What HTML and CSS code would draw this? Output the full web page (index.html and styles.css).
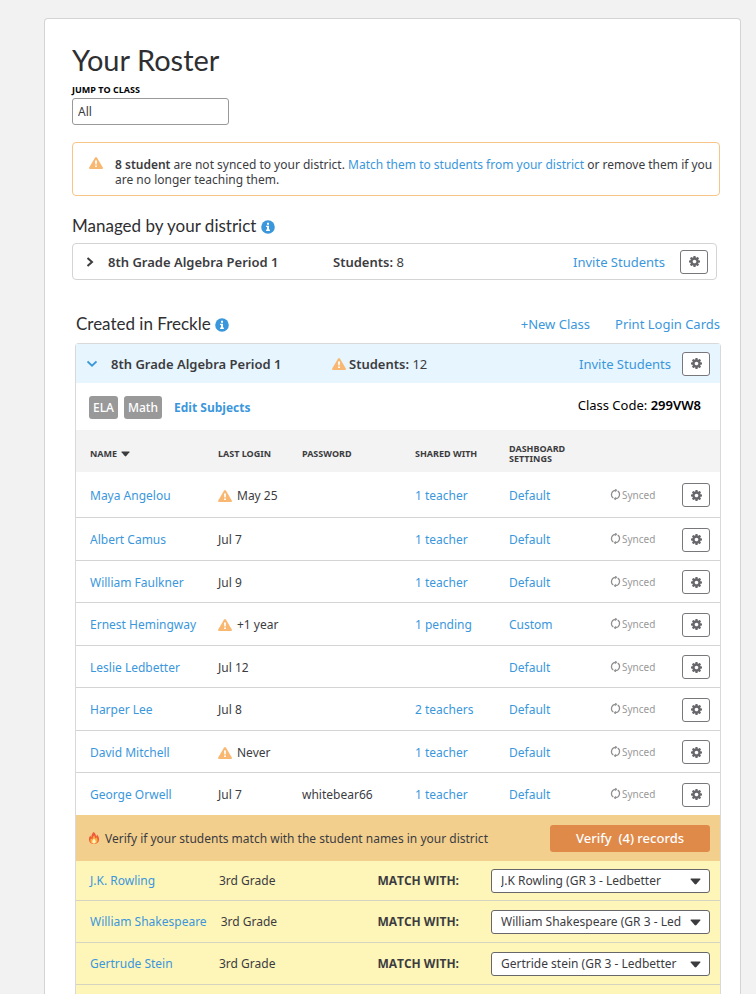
FILE: index.html
```html
<!DOCTYPE html>
<html lang="en">
<head>
<meta charset="utf-8">
<title>Your Roster</title>
<link rel="stylesheet" href="styles.css">
</head>
<body>
<svg class="sprite" aria-hidden="true">
  <symbol id="gear" viewBox="0 128 1536 1536"><path fill="currentColor" d="M1024 896q0-106-75-181t-181-75-181 75-75 181 75 181 181 75 181-75 75-181zm512-109v222q0 12-8 23t-20 13l-185 28q-19 54-39 91 35 50 107 138 10 12 10 25t-9 23q-27 37-99 108t-94 71q-12 0-26-9l-138-108q-44 23-91 38-16 136-29 186-7 28-36 28h-222q-14 0-24.5-8.5t-11.5-21.5l-28-184q-49-16-90-37l-141 107q-10 9-25 9-14 0-25-11-126-114-165-168-7-10-7-23 0-12 8-23 15-21 51-66.5t54-70.5q-27-50-41-99l-183-27q-13-2-21-12.5t-8-23.5v-222q0-12 8-23t19-13l186-28q14-46 39-92-40-57-107-138-10-12-10-24 0-10 9-23 26-36 98.5-107.5t94.5-71.5q13 0 26 10l138 107q44-23 91-38 16-136 29-186 7-28 36-28h222q14 0 24.5 8.5t11.5 21.5l28 184q49 16 90 37l142-107q9-9 24-9 13 0 25 10 129 119 165 170 7 8 7 22 0 12-8 23-15 21-51 66.5t-54 70.5q26 50 41 98l183 28q13 2 21 12.5t8 23.5z"/></symbol>
  <symbol id="warn" viewBox="0 0 14 12"><path fill="#f8b871" d="M6.1.6Q7-.5 7.9.6L13.8 10.600Q14.300 12 12.900 12H1.100Q-.3 12 .2 10.600Z"/><path fill="#fff" d="M6 3.500h2L7.700 7.500H6.300ZM6.100 8.400h1.800v1.700H6.100Z"/></symbol>
  <symbol id="info" viewBox="0 0 14 14"><circle cx="7" cy="7" r="6.800" fill="#3b97dc"/><path fill="#fff" d="M6 2.800h2v1.900H6ZM5.100 5.700H8v3.900h.9V11H5.100V9.600H6V7.100h-.9Z"/></symbol>
  <symbol id="sync" viewBox="0 0 12 12"><g fill="none" stroke="#8e8e8e" stroke-width="1.300"><path d="M3.600 9.800A4.600 4.600 0 0 1 6 1.400M8.400 2.200A4.600 4.600 0 0 1 6 10.600"/></g><path fill="#8e8e8e" d="M5.600-.8 8 1.400 5.600 3.600ZM6.400 8.400 4 10.600 6.400 12.800Z"/></symbol>
  <symbol id="fire" viewBox="0 0 12 12"><path fill="#ee5a3a" d="M5.600 0C7.500 1.300 8 3 8 4.400 8.700 4 9 3.200 9 2.600 10.500 4.200 11.200 6 11 8 10.700 10.500 8.600 12 6 12S1.300 10.500 1 8C.8 6.200 1.500 4.700 2.300 3.500 2.500 4.300 2.800 4.900 3.400 5.200 3.300 3.200 4.200 1.300 5.600 0Z"/><path fill="#fbb040" d="M6 3.500C7 4.500 7.300 5.500 7.200 6.500 8 6.200 8.300 5.700 8.500 5.200 10.300 7.300 10.200 11.600 6 11.800 1.900 11.600 1.900 8 3.100 6.200 3.500 6.800 4 7.100 4.500 7.200 4.500 5.800 5.100 4.500 6 3.500Z"/><path fill="#fff3c0" d="M6 6.800C8 8.300 8.500 11.300 6 11.600 3.500 11.300 4 8.300 6 6.800Z"/></symbol>
  <symbol id="right" viewBox="0 0 8 10"><path d="M1.500 1 6 5 1.500 9" fill="none" stroke="currentColor" stroke-width="2"/></symbol>
  <symbol id="down" viewBox="0 0 10 8"><path d="M.5 1.500 5 5.700 9.500 1.500" fill="none" stroke="currentColor" stroke-width="1.800"/></symbol>
  <symbol id="caret" viewBox="0 0 12 7"><path fill="currentColor" d="M1.200.3H10.800Q11.800.3 11.200 1.200L7 6.200Q6 7.200 5 6.200L.8 1.200Q.2.3 1.200.3Z"/></symbol>
</svg>
<main class="card">
  <h1>Your Roster</h1>
  <label class="jump-label" for="jump">JUMP TO CLASS</label>
  <select class="jump" id="jump"><option>All</option></select>

  <div class="notice">
    <svg class="icon-warn"><use href="#warn"/></svg>
    <p><b>8 student</b> are not synced to your district. <a href="#match">Match them to students from your district</a> or remove them if you are no longer teaching them.</p>
  </div>

  <h2>Managed by your district <svg class="icon-info"><use href="#info"/></svg></h2>
  <section class="class-bar managed">
    <button class="toggle" aria-label="Expand class"><svg class="icon-right"><use href="#right"/></svg></button>
    <h3>8th Grade Algebra Period 1</h3>
    <span class="count"><b>Students:</b> 8</span>
    <a class="invite" href="#invite">Invite Students</a>
    <button class="gear" aria-label="Class settings"><svg><use href="#gear"/></svg></button>
  </section>

  <div class="created-head">
    <h2>Created in Freckle <svg class="icon-info"><use href="#info"/></svg></h2>
    <nav><a href="#new">+New Class</a><a href="#print">Print Login Cards</a></nav>
  </div>
  <section class="created">
    <div class="class-bar open">
      <button class="toggle" aria-label="Collapse class"><svg class="icon-down"><use href="#down"/></svg></button>
      <h3>8th Grade Algebra Period 1</h3>
      <span class="count"><svg class="icon-warn"><use href="#warn"/></svg><b>Students:</b> 12</span>
      <a class="invite" href="#invite">Invite Students</a>
      <button class="gear" aria-label="Class settings"><svg><use href="#gear"/></svg></button>
    </div>
    <div class="subjects">
      <span class="tag">ELA</span><span class="tag">Math</span>
      <a href="#subjects">Edit Subjects</a>
      <p class="code">Class Code: <b>299VW8</b></p>
    </div>
    <table>
      <colgroup><col><col class="c-login"><col class="c-pass"><col class="c-shared"><col class="c-dash"><col class="c-sync"><col class="c-gear"></colgroup>
      <thead><tr><th>NAME <svg class="icon-sort"><use href="#caret"/></svg></th><th>LAST LOGIN</th><th>PASSWORD</th><th>SHARED WITH</th><th>DASHBOARD<br>SETTINGS</th><td></td><td></td></tr></thead>
      <tbody>
        <tr><td><a href="#s">Maya Angelou</a></td><td><svg class="icon-warn"><use href="#warn"/></svg>May 25</td><td></td><td><a href="#t">1 teacher</a></td><td><a href="#d">Default</a></td><td class="sync"><svg><use href="#sync"/></svg>Synced</td><td><button class="gear" aria-label="Student settings"><svg><use href="#gear"/></svg></button></td></tr>
        <tr><td><a href="#s">Albert Camus</a></td><td>Jul 7</td><td></td><td><a href="#t">1 teacher</a></td><td><a href="#d">Default</a></td><td class="sync"><svg><use href="#sync"/></svg>Synced</td><td><button class="gear" aria-label="Student settings"><svg><use href="#gear"/></svg></button></td></tr>
        <tr><td><a href="#s">William Faulkner</a></td><td>Jul 9</td><td></td><td><a href="#t">1 teacher</a></td><td><a href="#d">Default</a></td><td class="sync"><svg><use href="#sync"/></svg>Synced</td><td><button class="gear" aria-label="Student settings"><svg><use href="#gear"/></svg></button></td></tr>
        <tr><td><a href="#s">Ernest Hemingway</a></td><td><svg class="icon-warn"><use href="#warn"/></svg>+1 year</td><td></td><td><a href="#t">1 pending</a></td><td><a href="#d">Custom</a></td><td class="sync"><svg><use href="#sync"/></svg>Synced</td><td><button class="gear" aria-label="Student settings"><svg><use href="#gear"/></svg></button></td></tr>
        <tr><td><a href="#s">Leslie Ledbetter</a></td><td>Jul 12</td><td></td><td></td><td><a href="#d">Default</a></td><td class="sync"><svg><use href="#sync"/></svg>Synced</td><td><button class="gear" aria-label="Student settings"><svg><use href="#gear"/></svg></button></td></tr>
        <tr><td><a href="#s">Harper Lee</a></td><td>Jul 8</td><td></td><td><a href="#t">2 teachers</a></td><td><a href="#d">Default</a></td><td class="sync"><svg><use href="#sync"/></svg>Synced</td><td><button class="gear" aria-label="Student settings"><svg><use href="#gear"/></svg></button></td></tr>
        <tr><td><a href="#s">David Mitchell</a></td><td><svg class="icon-warn"><use href="#warn"/></svg>Never</td><td></td><td><a href="#t">1 teacher</a></td><td><a href="#d">Default</a></td><td class="sync"><svg><use href="#sync"/></svg>Synced</td><td><button class="gear" aria-label="Student settings"><svg><use href="#gear"/></svg></button></td></tr>
        <tr><td><a href="#s">George Orwell</a></td><td>Jul 7</td><td>whitebear66</td><td><a href="#t">1 teacher</a></td><td><a href="#d">Default</a></td><td class="sync"><svg><use href="#sync"/></svg>Synced</td><td><button class="gear" aria-label="Student settings"><svg><use href="#gear"/></svg></button></td></tr>
      </tbody>
    </table>
    <div class="verify" id="match">
      <svg class="icon-fire"><use href="#fire"/></svg>
      <p>Verify if your students match with the student names in your district</p>
      <button>Verify&nbsp; (4) records</button>
    </div>
    <ul class="matches">
      <li><a href="#s">J.K. Rowling</a><span class="grade">3rd Grade</span><label for="m1">MATCH WITH:</label><span class="pick"><select id="m1"><option>J.K Rowling (GR 3 - Ledbetter</option></select><svg><use href="#caret"/></svg></span></li>
      <li><a href="#s">William Shakespeare</a><span class="grade">3rd Grade</span><label for="m2">MATCH WITH:</label><span class="pick"><select id="m2"><option>William Shakespeare (GR 3 - Led</option></select><svg><use href="#caret"/></svg></span></li>
      <li><a href="#s">Gertrude Stein</a><span class="grade">3rd Grade</span><label for="m3">MATCH WITH:</label><span class="pick"><select id="m3"><option>Gertride stein (GR 3 - Ledbetter</option></select><svg><use href="#caret"/></svg></span></li>
    </ul>
  </section>
</main>
</body>
</html>
```
FILE: styles.css
```css
* { box-sizing: border-box; }
body {
  margin: 0;
  min-height: 100vh;
  display: flex;
  flex-direction: column;
  padding: 18px 15px 0 44px;
  background: #f2f2f2;
  color: #3c3c3f;
  font: 12px/15px "Noto Sans", "Open Sans", sans-serif;
}
.sprite { position: absolute; width: 0; height: 0; }
svg { display: inline-block; flex: none; overflow: visible; }
a { color: #3b97dc; text-decoration: none; }
h1, h2, h3, p, ul { margin: 0; padding: 0; }
h1, h2 { font-family: Lato, sans-serif; font-weight: 400; color: #2f2f32; }
h1 { font-size: 29px; line-height: 36px; }
h2 { font-size: 17px; line-height: 22px; }
h3 { font-size: 13px; line-height: 18px; font-weight: 600; }
b { font-weight: 600; }
button, select { font: inherit; color: inherit; }

.card {
  flex: 1;
  display: flex;
  flex-direction: column;
  padding: 23px 20px 0 27px;
  background: #fff;
  border: 1px solid #d4d4d4;
  border-bottom: 0;
  border-radius: 4px 4px 0 0;
}

.icon-warn { width: 14px; height: 12px; }
.icon-info { width: 14px; height: 14px; vertical-align: -2px; }
.icon-right { width: 8px; height: 10px; }
.icon-down { width: 10px; height: 8px; }
.icon-sort { width: 9px; height: 6px; margin-left: 2px; }
.icon-fire { width: 12px; height: 12px; }

.jump-label {
  margin-top: 5px;
  color: #000;
  font-family: "Open Sans", sans-serif;
  font-size: 9px;
  line-height: 14px;
  font-weight: 700;
}
.jump {
  width: 157px;
  height: 27px;
  margin-top: 1px;
  padding: 0 5px;
  appearance: none;
  background: #fff;
  border: 1px solid #999;
  border-radius: 3px;
}

.notice {
  display: flex;
  gap: 12px;
  margin-top: 17px;
  padding: 14px 3px 8px 16px;
  border: 1px solid #f6c587;
  border-radius: 4px;
}

.notice + h2 { margin-top: 19px; }
.class-bar { display: flex; align-items: center; font-size: 13px; line-height: 18px; }
.toggle { display: flex; width: 22px; padding: 0; border: 0; background: none; }
.class-bar h3 { width: 225px; }
.invite { margin-left: auto; margin-right: 15px; }
.managed {
  height: 37px;
  margin: 6px 3px 0 0;
  padding: 0 8px 0 13px;
  border: 1px solid #d4d4d4;
  border-radius: 4px;
}
.gear {
  display: flex;
  align-items: center;
  justify-content: center;
  width: 28px;
  height: 24px;
  padding: 0;
  background: #fff;
  border: 1px solid #77777c;
  border-radius: 3px;
  color: #66666b;
}
.gear svg { width: 11px; height: 11px; }

.created-head {
  display: flex;
  align-items: center;
  justify-content: space-between;
  margin: 33px 0 0 4px;
}
.created-head nav { display: flex; gap: 25px; font-size: 13px; line-height: 18px; }
.created {
  flex: 1;
  display: flex;
  flex-direction: column;
  margin: 8px -1px 0 3px;
  border: 1px solid #d9d9d9;
  border-bottom: 0;
  border-radius: 4px 4px 0 0;
}
.open { height: 39px; padding: 0 10px 0 11px; background: #e6f5fe; }
.open .toggle { width: 24px; color: #3b97dc; }
.open h3 { width: 221px; }
.open .invite { margin-right: 11px; }
.count .icon-warn { margin-right: 3px; vertical-align: -1px; }

.subjects { display: flex; align-items: center; height: 47px; padding: 2px 19px 0 13px; }
.tag {
  margin-right: 6px;
  padding: 4px;
  background: #999;
  border-radius: 3px;
  color: #fff;
  font-weight: 500;
}
.subjects a { margin-left: 6px; font-family: "Open Sans", sans-serif; font-weight: 700; }
.code { margin-left: auto; padding-bottom: 6px; color: #000; font-size: 13px; line-height: 18px; }

table { width: 100%; border-collapse: collapse; table-layout: fixed; }
.c-login { width: 84px; }
.c-pass { width: 113px; }
.c-shared { width: 94px; }
.c-dash { width: 101px; }
.c-sync { width: 72px; }
.c-gear { width: 38px; }
th, td { padding: 0; text-align: left; white-space: nowrap; }
th:first-child, td:first-child { padding-left: 14px; }
thead { height: 42px; background: #f3f3f3; }
th {
  padding-top: 5px;
  font-size: 9px;
  line-height: 10px;
  font-weight: 700;
}
tbody tr { height: 43px; border-bottom: 1px solid #d4d4d4; }
tbody tr:nth-child(odd) { height: 42px; }
tbody tr:first-child { height: 45px; }
tbody tr:last-child { border-bottom: 0; }
tbody td { padding-top: 2px; }
td .icon-warn { margin-right: 5px; vertical-align: -2px; }
.sync { color: #999; font-size: 10px; }
.sync svg { width: 11px; height: 11px; margin-right: 1px; vertical-align: -1px; }

.verify {
  display: flex;
  align-items: center;
  gap: 5px;
  height: 46px;
  padding: 0 10px 0 12px;
  background: #f3cf8e;
}
.verify button {
  width: 160px;
  height: 27px;
  margin-left: auto;
  padding: 0;
  background: #e08a4a;
  border: 0;
  border-radius: 3px;
  color: #fff;
  font-size: 13px;
  font-weight: 500;
}

.matches { flex: 1; min-height: 134px; background: #fef5b9; list-style: none; }
.matches li {
  display: flex;
  align-items: center;
  height: 42px;
  padding: 0 10px 0 14px;
  border-bottom: 1px solid #d6d4c0;
}
.matches li:first-child { height: 40px; }
.matches a { min-width: 115px; }
.grade { margin: 0 auto 0 14px; }
.matches label {
  margin-right: 32px;
  font-family: "Open Sans", sans-serif;
  font-weight: 700;
}
.pick { position: relative; width: 219px; }
.pick select {
  display: block;
  width: 100%;
  height: 24px;
  padding: 0 24px 0 9px;
  appearance: none;
  background: #fff;
  border: 1px solid #66666b;
  border-radius: 3px;
}
.pick svg { position: absolute; top: 9px; right: 9px; width: 11px; height: 7px; pointer-events: none; }
```
